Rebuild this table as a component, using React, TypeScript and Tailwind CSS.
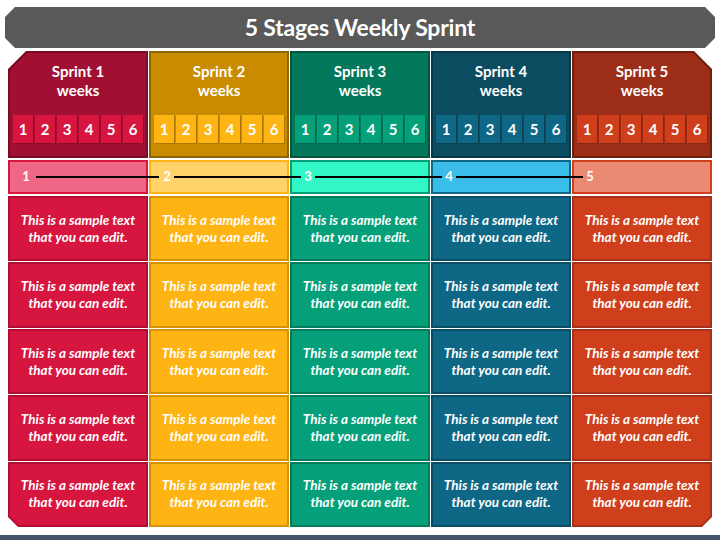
import React from 'react';

interface Sprint {
  n: number;
  headOuter: string;
  headInner: string;
  box: string;
  tlOuter: string;
  tlInner: string;
  bodyOuter: string;
  bodyInner: string;
}

const sprints: Sprint[] = [
  {
    n: 1,
    headOuter: 'bg-[#7a0b25] [clip-path:polygon(18px_0,100%_0,100%_100%,0_100%,0_18px)]',
    headInner: 'bg-[#a10f32] [clip-path:polygon(17px_0,100%_0,100%_100%,0_100%,0_17px)]',
    box: 'bg-[#d6163f]',
    tlOuter: 'bg-[#d6163f]',
    tlInner: 'bg-[#f06686]',
    bodyOuter: 'bg-[#b20e35]',
    bodyInner: 'bg-[#d6163f]',
  },
  {
    n: 2,
    headOuter: 'bg-[#8f6500]',
    headInner: 'bg-[#c98b00]',
    box: 'bg-[#feb412]',
    tlOuter: 'bg-[#feb412]',
    tlInner: 'bg-[#ffd36a]',
    bodyOuter: 'bg-[#d59207]',
    bodyInner: 'bg-[#feb412]',
  },
  {
    n: 3,
    headOuter: 'bg-[#02553f]',
    headInner: 'bg-[#04785a]',
    box: 'bg-[#05a079]',
    tlOuter: 'bg-[#05a079]',
    tlInner: 'bg-[#33f7c6]',
    bodyOuter: 'bg-[#037d5e]',
    bodyInner: 'bg-[#05a079]',
  },
  {
    n: 4,
    headOuter: 'bg-[#083847]',
    headInner: 'bg-[#0b4c61]',
    box: 'bg-[#0e6784]',
    tlOuter: 'bg-[#0e6784]',
    tlInner: 'bg-[#3abee9]',
    bodyOuter: 'bg-[#0a4d63]',
    bodyInner: 'bg-[#0e6784]',
  },
  {
    n: 5,
    headOuter: 'bg-[#6e1f10] [clip-path:polygon(0_0,calc(100%_-_18px)_0,100%_18px,100%_100%,0_100%)]',
    headInner: 'bg-[#9c2d17] [clip-path:polygon(0_0,calc(100%_-_17px)_0,100%_17px,100%_100%,0_100%)]',
    box: 'bg-[#cf3f1c]',
    tlOuter: 'bg-[#cf3f1c]',
    tlInner: 'bg-[#eb8a72]',
    bodyOuter: 'bg-[#a8301a]',
    bodyInner: 'bg-[#cf3f1c]',
  },
];

// bottom corners of the last row are cut on the outer columns
const lastRowClip = [
  {
    outer: '[clip-path:polygon(0_0,100%_0,100%_100%,10px_100%,0_calc(100%_-_10px))]',
    inner: '[clip-path:polygon(0_0,100%_0,100%_100%,9px_100%,0_calc(100%_-_9px))]',
  },
  { outer: '', inner: '' },
  { outer: '', inner: '' },
  { outer: '', inner: '' },
  {
    outer: '[clip-path:polygon(0_0,100%_0,100%_calc(100%_-_10px),calc(100%_-_10px)_100%,0_100%)]',
    inner: '[clip-path:polygon(0_0,100%_0,100%_calc(100%_-_9px),calc(100%_-_9px)_100%,0_100%)]',
  },
];

const weeks = [1, 2, 3, 4, 5, 6];
const rows = [0, 1, 2, 3, 4];

function Column({ s, idx }: { s: Sprint; idx: number }) {
  return (
    <div className="flex flex-col">
      {/* header */}
      <div className={`h-[107px] p-[2px] ${s.headOuter}`}>
        <div className={`h-full flex flex-col items-center pt-[9px] ${s.headInner}`}>
          <div className="text-[15px] leading-[19px] font-bold">Sprint {s.n}</div>
          <div className="text-[15px] leading-[19px] font-bold">weeks</div>
          <div className="flex gap-[2px] mt-[15px]">
            {weeks.map((w) => (
              <div
                key={w}
                className={`w-[20px] h-[28px] flex items-center justify-center text-[15px] font-bold shadow-[1px_1px_0_rgba(0,0,0,0.15)] ${s.box}`}
              >
                {w}
              </div>
            ))}
          </div>
        </div>
      </div>

      {/* timeline */}
      <div className={`h-[34px] mt-[2px] p-[2px] ${s.tlOuter}`}>
        <div className={`h-full flex items-center ${s.tlInner}`}>
          <span className="ml-[6px] w-[20px] text-center text-[13px] font-bold">{s.n}</span>
        </div>
      </div>

      {/* body */}
      <div className="flex-1 flex flex-col gap-px mt-[2px]">
        {rows.map((r) => {
          const clip = r === 4 ? lastRowClip[idx] : { outer: '', inner: '' };
          return (
            <div key={r} className={`flex-1 p-[2px] ${s.bodyOuter} ${clip.outer}`}>
              <div
                className={`h-full flex flex-col items-center justify-center italic font-bold text-[13.5px] leading-[17px] ${s.bodyInner} ${clip.inner}`}
              >
                <span>This is a sample text</span>
                <span>that you can edit.</span>
              </div>
            </div>
          );
        })}
      </div>
    </div>
  );
}

export default function App() {
  return (
    <div className="w-[720px] h-[540px] bg-white flex flex-col text-white font-['Lato','Open_Sans',sans-serif] overflow-hidden">
      <div className="mx-[5px] mt-[7px] h-[41px] shrink-0 bg-[#595959] flex items-center justify-center [clip-path:polygon(10px_0,calc(100%_-_10px)_0,100%_10px,100%_calc(100%_-_10px),calc(100%_-_10px)_100%,10px_100%,0_calc(100%_-_10px),0_10px)]">
        <h1 className="text-[23px] font-bold tracking-[-0.2px]">5 Stages Weekly Sprint</h1>
      </div>

      <div className="relative mx-[8px] mt-[3px] h-[476px] shrink-0 grid grid-cols-5 gap-x-px">
        {sprints.map((s, i) => (
          <Column key={s.n} s={s} idx={i} />
        ))}
        {/* connecting line over the timeline row */}
        <svg className="absolute left-0 top-[109px] pointer-events-none" width="704" height="34">
          <g stroke="#000" strokeWidth="2">
            <line x1="28" y1="17" x2="151" y2="17" />
            <line x1="166" y1="17" x2="293" y2="17" />
            <line x1="307" y1="17" x2="434" y2="17" />
            <line x1="448" y1="17" x2="575" y2="17" />
          </g>
        </svg>
      </div>

      <div className="mt-auto h-[5px] bg-[#44546a]" />
    </div>
  );
}
